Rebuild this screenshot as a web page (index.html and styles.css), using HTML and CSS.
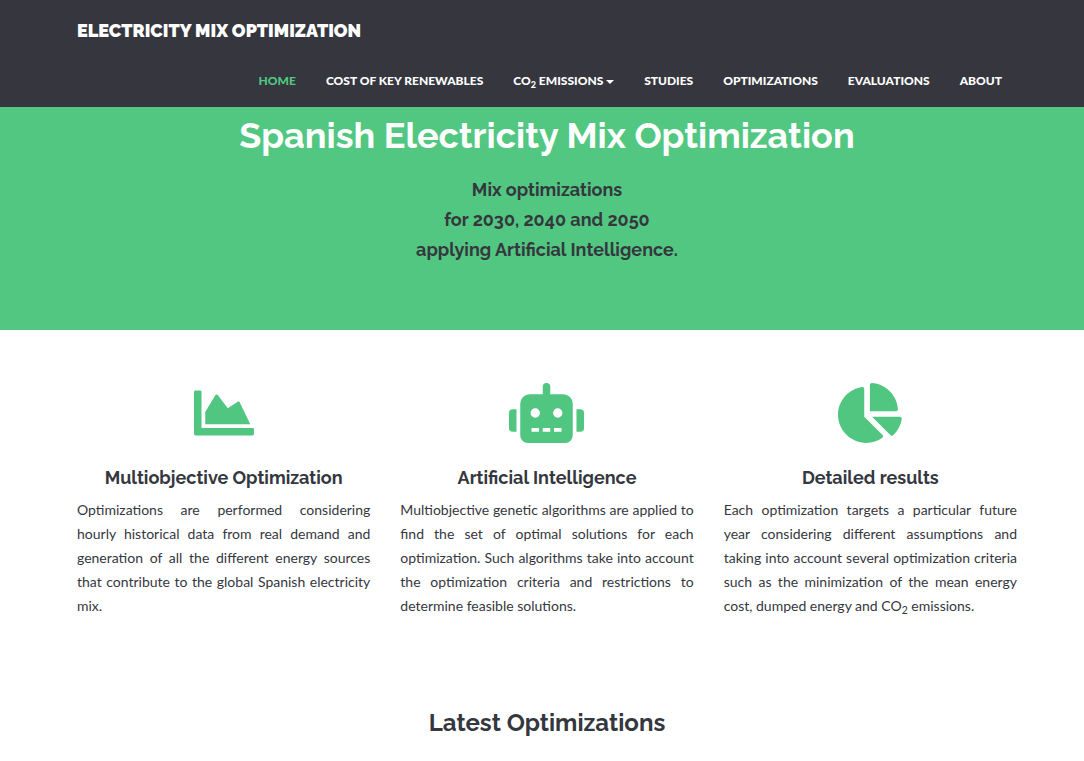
FILE: index.html
```html
<!DOCTYPE html>
<html lang="en">
<head>
<meta charset="utf-8">
<meta name="viewport" content="width=device-width, initial-scale=1">
<title>Electricity Mix Optimization</title>
<link rel="stylesheet" href="styles.css">
</head>
<body>
<header class="navbar">
  <div class="container">
    <a class="brand" href="#">ELECTRICITY MIX OPTIMIZATION</a>
    <nav class="nav">
      <a class="nav-link active" href="#">HOME</a>
      <a class="nav-link" href="#">COST OF KEY RENEWABLES</a>
      <a class="nav-link" href="#">CO<sub>2</sub> EMISSIONS <span class="caret"></span></a>
      <a class="nav-link" href="#">STUDIES</a>
      <a class="nav-link" href="#">OPTIMIZATIONS</a>
      <a class="nav-link" href="#">EVALUATIONS</a>
      <a class="nav-link" href="#">ABOUT</a>
    </nav>
  </div>
</header>
<main>
  <section class="hero">
    <div class="container">
      <h1 class="hero-title">Spanish Electricity Mix Optimization</h1>
      <p class="hero-text">Mix optimizations<br>for 2030, 2040 and 2050<br>applying Artificial Intelligence.</p>
    </div>
  </section>
  <section class="container features">
    <article class="feature">
      <svg class="icon" viewBox="0 0 512 512" aria-hidden="true"><path d="M500 384c6.6 0 12 5.4 12 12v40c0 6.6-5.4 12-12 12H12c-6.6 0-12-5.4-12-12V76c0-6.6 5.4-12 12-12h40c6.6 0 12 5.4 12 12v308h436zM372.7 159.5L288 216l-85.3-113.7c-5.1-6.8-15.5-6.3-19.9 1L96 248v104h384l-89.9-187.8c-3.2-6.5-11.4-8.7-17.4-4.7z"/></svg>
      <h2 class="feature-title">Multiobjective Optimization</h2>
      <p class="feature-text">Optimizations are performed considering hourly historical data from real demand and generation of all the different energy sources that contribute to the global Spanish electricity mix.</p>
    </article>
    <article class="feature">
      <svg class="icon" viewBox="0 0 640 512" aria-hidden="true"><path d="M32 224H64V416H32A32 32 0 0 1 0 384V256A32 32 0 0 1 32 224ZM544 176V448a64 64 0 0 1-64 64H160a64 64 0 0 1-64-64V176a80 80 0 0 1 80-80H288V32a32 32 0 0 1 64 0V96H464A80 80 0 0 1 544 176ZM264 256a40 40 0 1 0-40 40A40 40 0 0 0 264 256Zm-8 128H192v32h64Zm96 0H288v32h64ZM456 256a40 40 0 1 0-40 40A40 40 0 0 0 456 256Zm-8 128H384v32h64ZM640 256V384a32 32 0 0 1-32 32H576V224h32A32 32 0 0 1 640 256Z"/></svg>
      <h2 class="feature-title">Artificial Intelligence</h2>
      <p class="feature-text">Multiobjective genetic algorithms are applied to find the set of optimal solutions for each optimization. Such algorithms take into account the optimization criteria and restrictions to determine feasible solutions.</p>
    </article>
    <article class="feature">
      <svg class="icon" viewBox="0 0 544 512" aria-hidden="true"><path d="M527.79 288H290.5l158.03 158.03c6.04 6.04 15.98 6.53 22.19.68 38.7-36.46 65.32-85.61 73.13-140.86 1.34-9.46-6.51-17.85-16.06-17.85zm-15.83-64.8C503.72 103.74 408.26 8.28 288.8.04 279.68-.59 272 7.1 272 16.24V240h223.77c9.14 0 16.82-7.68 16.19-16.8zM224 288V50.71c0-9.55-8.39-17.4-17.84-16.06C86.99 51.49-4.1 155.6.14 280.37 4.5 408.51 114.83 513.59 243.03 511.98c50.4-.63 96.97-16.87 135.26-44.03 7.9-5.6 8.42-17.23 1.57-24.08L224 288z"/></svg>
      <h2 class="feature-title">Detailed results</h2>
      <p class="feature-text">Each optimization targets a particular future year considering different assumptions and taking into account several optimization criteria such as the minimization of the mean energy cost, dumped energy and CO<sub>2</sub> emissions.</p>
    </article>
  </section>
  <section class="container">
    <h2 class="section-title">Latest Optimizations</h2>
  </section>
</main>
</body>
</html>
```
FILE: styles.css
```css
* { box-sizing: border-box; }

body {
  margin: 0;
  background: #fff;
  color: #35373e;
  font: 14px/24px Lato, "Liberation Sans", sans-serif;
}

h1, h2, p { margin: 0; }

sub {
  font-size: 75%;
  line-height: 1;
  vertical-align: -3px;
}

.container { padding: 0 67px 0 77px; }

.navbar { background: #35363e; }

.brand {
  display: block;
  padding: 20px 0;
  font: 900 18px/22px Raleway, Lato, sans-serif;
  color: #fff;
  text-decoration: none;
}

.nav {
  display: flex;
  justify-content: flex-end;
}

.nav-link {
  padding: 9px 15px 16px;
  font-size: 12px;
  line-height: 20px;
  font-weight: 900;
  color: #fff;
  text-decoration: none;
  white-space: nowrap;
}

.nav-link.active { color: #50c681; }

.caret {
  display: inline-block;
  border-top: 4px solid;
  border-left: 4px solid transparent;
  border-right: 4px solid transparent;
  vertical-align: middle;
}

.hero {
  background: #52c781;
  text-align: center;
  padding: 8px 0 65px;
}

.hero-title {
  font: 700 36px/40px Raleway, Lato, sans-serif;
  color: #fff;
}

.hero-text {
  padding-top: 20px;
  font: 700 18px/30px Raleway, Lato, sans-serif;
}

.features {
  display: grid;
  grid-template-columns: repeat(3, 1fr);
  gap: 30px;
  padding-top: 53px;
}

.icon {
  display: block;
  height: 60px;
  margin: 0 auto;
  fill: #50c681;
}

.feature-title {
  padding: 25px 0 10px;
  font: 700 18px/20px Raleway, Lato, sans-serif;
  text-align: center;
}

.feature-text { text-align: justify; }

.section-title {
  padding: 90px 0 24px;
  font: 700 24px/30px Raleway, Lato, sans-serif;
  text-align: center;
}
```
